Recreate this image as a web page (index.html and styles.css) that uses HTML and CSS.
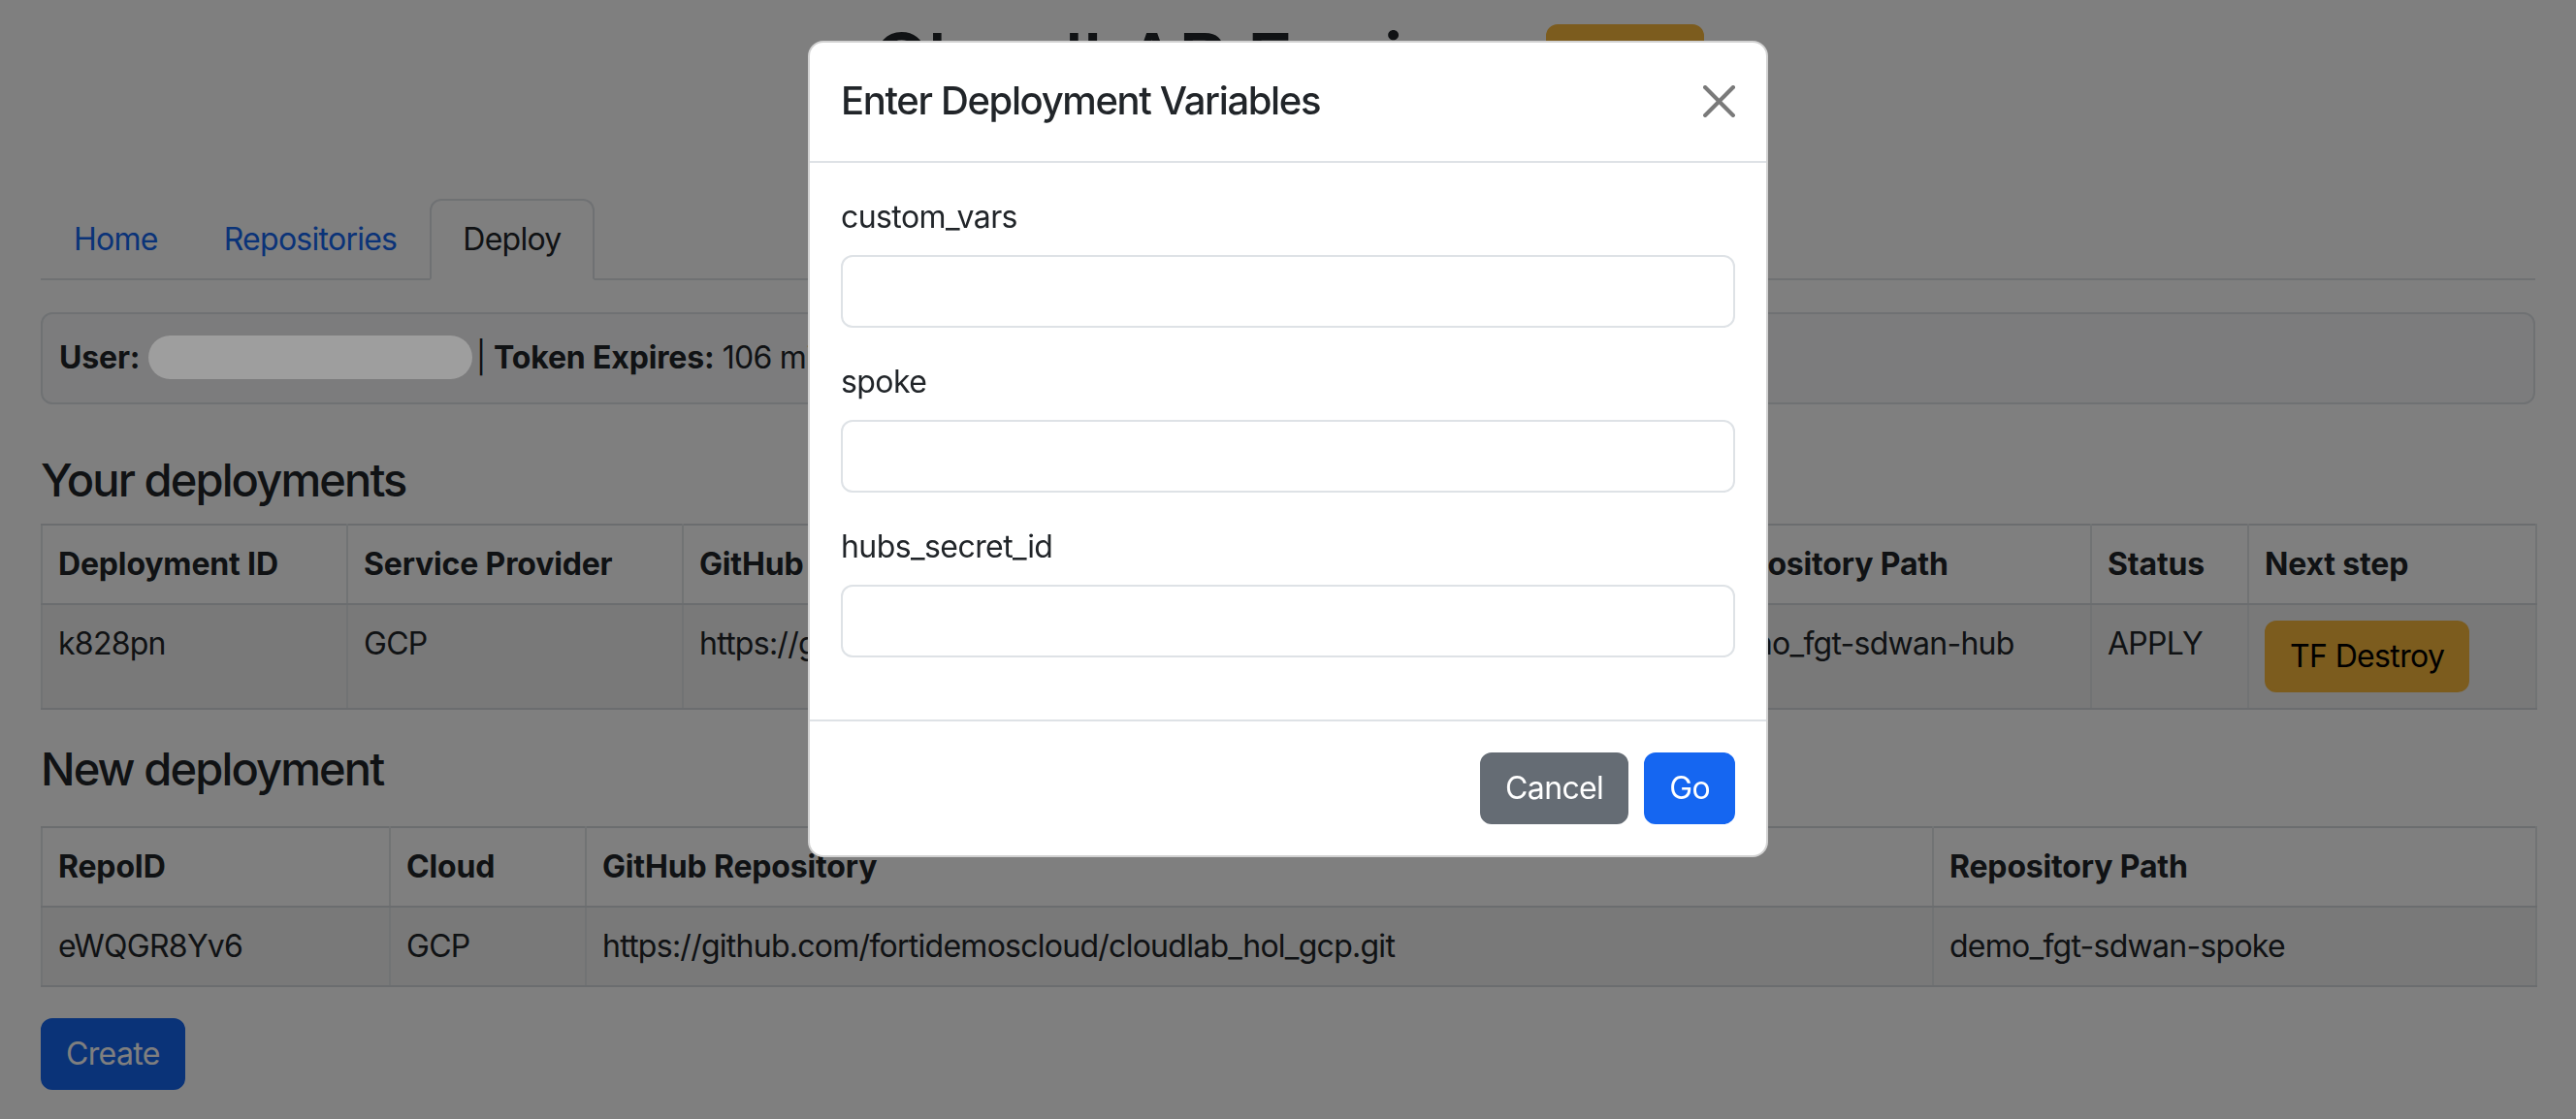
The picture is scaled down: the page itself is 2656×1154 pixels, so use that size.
FILE: index.html
```html
<!DOCTYPE html>
<html lang="en">
<head>
<meta charset="utf-8">
<title>CloudLAB Engine - Deploy</title>
<link rel="stylesheet" href="styles.css">
</head>
<body>
<div class="page">
  <header class="title-row">
    <h1 class="app-title">CloudLAB Engine</h1>
    <button class="btn btn-warning btn-logout">Logout</button>
  </header>

  <nav class="tabs">
    <a class="tab">Home</a>
    <a class="tab">Repositories</a>
    <a class="tab active">Deploy</a>
  </nav>

  <div class="user-card"><strong>User:</strong> <span class="redact"></span> | <strong>Token Expires:</strong> 106 minutes</div>

  <h4 class="section-title">Your deployments</h4>
  <table class="table">
    <colgroup>
      <col class="d1"><col class="d2"><col class="d3"><col class="d4"><col class="d5"><col class="d6">
    </colgroup>
    <thead>
      <tr><th>Deployment ID</th><th>Service Provider</th><th>GitHub Repository</th><th>Repository Path</th><th>Status</th><th>Next step</th></tr>
    </thead>
    <tbody>
      <tr>
        <td>k828pn</td>
        <td>GCP</td>
        <td>https://github.com/fortidemoscloud/cloudlab_hol_gcp.git</td>
        <td>demo_fgt-sdwan-hub</td>
        <td>APPLY</td>
        <td><button class="btn btn-warning">TF Destroy</button></td>
      </tr>
    </tbody>
  </table>

  <h4 class="section-title second">New deployment</h4>
  <table class="table">
    <colgroup>
      <col class="n1"><col class="n2"><col class="n3"><col class="n4">
    </colgroup>
    <thead>
      <tr><th>RepoID</th><th>Cloud</th><th>GitHub Repository</th><th>Repository Path</th></tr>
    </thead>
    <tbody>
      <tr>
        <td>eWQGR8Yv6</td>
        <td>GCP</td>
        <td>https://github.com/fortidemoscloud/cloudlab_hol_gcp.git</td>
        <td>demo_fgt-sdwan-spoke</td>
      </tr>
    </tbody>
  </table>

  <button class="btn btn-primary">Create</button>
</div>

<div class="backdrop"></div>

<div class="modal">
  <div class="modal-content">
    <div class="modal-header">
      <h5 class="modal-title">Enter Deployment Variables</h5>
      <button class="btn-close" aria-label="Close">
        <svg viewBox="0 0 16 16" width="33" height="33"><path d="M.293.293a1 1 0 0 1 1.414 0L8 6.586 14.293.293a1 1 0 1 1 1.414 1.414L9.414 8l6.293 6.293a1 1 0 0 1-1.414 1.414L8 9.414l-6.293 6.293a1 1 0 0 1-1.414-1.414L6.586 8 .293 1.707a1 1 0 0 1 0-1.414z" fill="currentColor"/></svg>
      </button>
    </div>
    <div class="modal-body">
      <div class="field">
        <label class="field-label">custom_vars</label>
        <input class="form-control" type="text">
      </div>
      <div class="field">
        <label class="field-label">spoke</label>
        <input class="form-control" type="text">
      </div>
      <div class="field">
        <label class="field-label">hubs_secret_id</label>
        <input class="form-control" type="text">
      </div>
    </div>
    <div class="modal-footer">
      <button class="btn btn-secondary">Cancel</button>
      <button class="btn btn-primary">Go</button>
    </div>
  </div>
</div>
</body>
</html>
```

FILE: styles.css
```css
* { box-sizing: border-box; }

html, body { margin: 0; padding: 0; }

body {
  font-family: Inter, "Noto Sans", "Liberation Sans", sans-serif;
  font-size: 32px;
  line-height: 48px;
  letter-spacing: -0.023em;
  color: #212529;
  background: #fff;
  width: 2656px;
  height: 1154px;
  overflow: hidden;
}

.page { padding: 0 42px; }

.title-row {
  display: flex;
  justify-content: center;
  align-items: center;
  gap: 57px;
  margin-top: 15px;
  height: 96px;
}

.app-title {
  margin: 0;
  font-size: 80px;
  line-height: 96px;
  font-weight: 500;
  letter-spacing: -0.02em;
}

.btn {
  display: inline-flex;
  align-items: center;
  justify-content: center;
  font-family: inherit;
  font-size: 32px;
  line-height: 48px;
  letter-spacing: -0.02em;
  height: 74px;
  padding: 0 24px;
  border: 2px solid transparent;
  border-radius: 12px;
}

.btn-warning { background: #f8b83c; border-color: #f8b83c; color: #000; }
.btn-primary { background: #1566f1; border-color: #1566f1; color: #fff; }
.btn-secondary { background: #656c74; border-color: #656c74; color: #fff; }

.btn-logout { width: 163px; height: 76px; }

.tabs {
  display: flex;
  margin-top: 94px;
  border-bottom: 2px solid #dee2e6;
}

.tab {
  padding: 16px 32px;
  border: 2px solid transparent;
  border-radius: 12px 12px 0 0;
  margin-bottom: -2px;
  color: #1566f1;
}

.tab.active {
  color: #212529;
  background: #fff;
  border-color: #dee2e6 #dee2e6 #fff;
}

.user-card {
  margin-top: 33px;
  padding: 21px 17px 22px;
  white-space: nowrap;
  background: #f8f9fa;
  border: 2px solid #dee2e6;
  border-radius: 12px;
}

.user-card strong { font-weight: 700; letter-spacing: -0.005em; }

.redact {
  position: relative;
  z-index: 1060;
  display: inline-block;
  vertical-align: top;
  margin-top: 1px;
  margin-right: -4px;
  width: 334px;
  height: 45px;
  border-radius: 23px;
  background: #9e9e9e;
}

.section-title {
  margin: 49px 0 16px;
  font-size: 47px;
  line-height: 58px;
  font-weight: 500;
  letter-spacing: -0.04em;
}

.section-title.second { margin-top: 0; margin-bottom: 30px; }

.table {
  width: 100%;
  border-collapse: collapse;
  table-layout: fixed;
  margin-bottom: 32px;
}

.table th,
.table td {
  border: 2px solid #e3e6e9;
  border-top-color: #d6dade;
  border-bottom-color: #d6dade;
  padding: 16px;
  text-align: left;
  vertical-align: top;
  white-space: nowrap;
}

.table th { font-weight: 700; letter-spacing: -0.005em; }
.table tbody td { background: rgba(0, 0, 0, 0.05); }

.d1 { width: 315px; }
.d2 { width: 346px; }
.d3 { width: 1042px; }
.d4 { width: 410px; }
.d5 { width: 162px; }
.d6 { width: 297px; }

.n1 { width: 359px; }
.n2 { width: 202px; }
.n3 { width: 1389px; }
.n4 { width: 622px; }

.backdrop {
  position: fixed;
  inset: 0;
  z-index: 1050;
  background: rgba(0, 0, 0, 0.5);
}

.modal {
  position: fixed;
  inset: 0;
  z-index: 1055;
  display: flex;
  justify-content: center;
  align-items: flex-start;
  padding-top: 42px;
}

.modal-content {
  width: 990px;
  background: #fff;
  border: 2px solid rgba(0, 0, 0, 0.175);
  border-radius: 16px;
  display: flex;
  flex-direction: column;
}

.modal-header {
  display: flex;
  align-items: center;
  padding: 30px 32px 32px;
  border-bottom: 2px solid #dee2e6;
}

.modal-title {
  margin: 0;
  font-size: 40px;
  line-height: 60px;
  font-weight: 500;
  letter-spacing: -0.034em;
}

.btn-close {
  margin-left: auto;
  width: 33px;
  height: 33px;
  padding: 0;
  border: 0;
  background: transparent;
  color: #7a7a7a;
  display: flex;
}

.modal-body {
  padding: 32px;
}

.field { margin-bottom: 32px; display: flex; flex-direction: column; }

.field-label {
  margin-bottom: 15px;
  line-height: 48px;
  letter-spacing: -0.018em;
}

.form-control {
  height: 75px;
  border: 2px solid #dee2e6;
  border-radius: 12px;
  background: #fff;
  font-family: inherit;
  font-size: 32px;
  padding: 0 24px;
}

.modal-footer {
  display: flex;
  justify-content: flex-end;
  align-items: center;
  padding: 24px;
  border-top: 2px solid #dee2e6;
}

.modal-footer .btn { margin: 8px; }
```
